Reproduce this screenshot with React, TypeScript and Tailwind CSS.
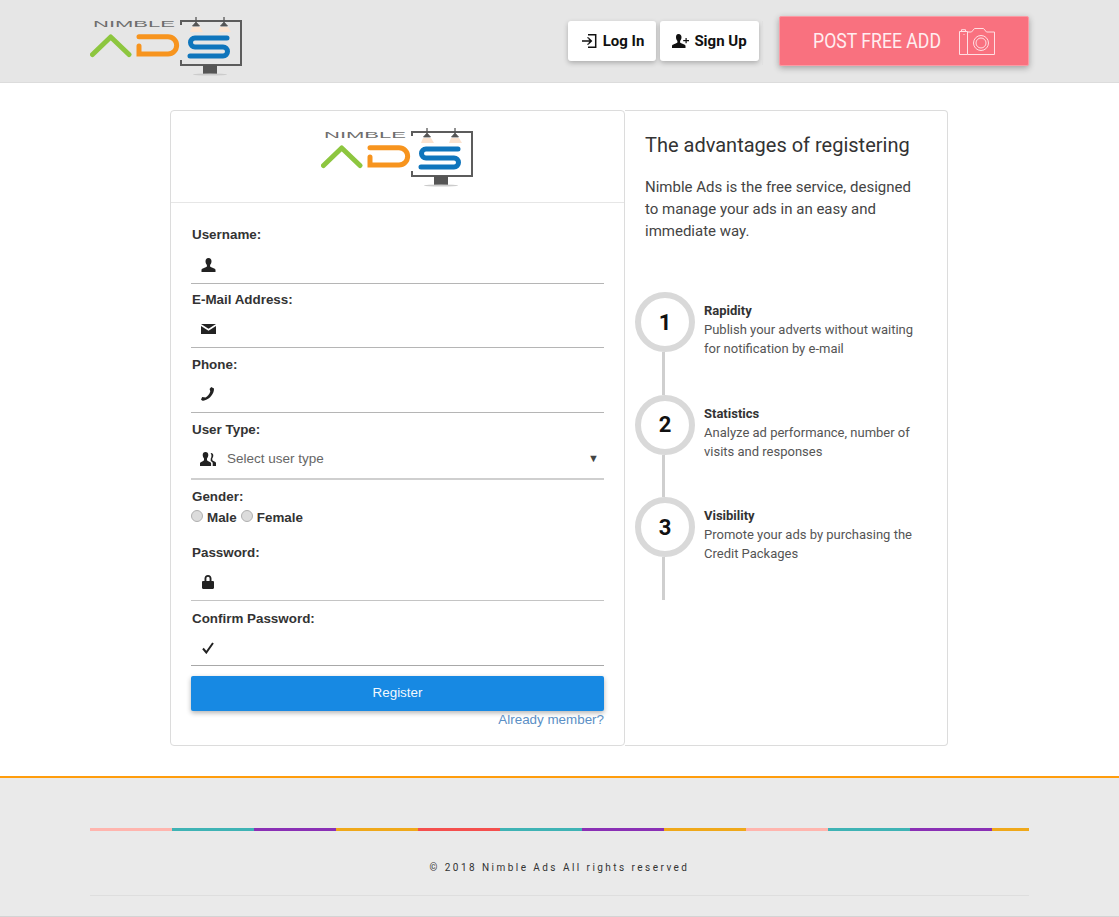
import type { ReactNode } from 'react';

const Logo = () => (
  <svg width="153" height="60" viewBox="0 0 153 60" fill="none">
    <text x="3" y="11" fontFamily="Liberation Sans, sans-serif" fontSize="9" fill="#6e6e6e" textLength="82" lengthAdjust="spacingAndGlyphs">NIMBLE</text>
    <path d="M2.500 38.500 20.700 21 39 38.500" stroke="#8dc63f" strokeWidth="5" strokeLinecap="round" strokeLinejoin="round" />
    <path d="M49 30v8h29a8.600 8.600 0 0 0 0-17.300H49" stroke="#f7941e" strokeWidth="5" strokeLinecap="round" />
    <path d="M137 22H105a4.500 4.500 0 0 0 0 9h28a4.500 4.500 0 0 1 0 9H100" stroke="#0f75bc" strokeWidth="5" strokeLinecap="round" />
    <path d="M91 9V5h60v44H91v-5" stroke="#5c5c5c" strokeWidth="2" />
    <path d="M113 49h14v9h-14z" fill="#555" />
    <ellipse cx="120" cy="58.500" rx="17" ry="1" fill="#ccc" />
    <path d="M106 1v5l-3.500 4h7l-3.500-4zM134 1v5l-3.500 4h7l-3.500-4z" fill="#555" stroke="#555" strokeWidth="0.800" />
    <path d="M102 11h8l3 5h-13zM130 11h8l3 5h-13z" fill="#fbe3d0" />
  </svg>
);

const UserIcon = () => (
  <svg width="15" height="14" viewBox="0 0 15 14" fill="currentColor">
    <path d="M7.500 0c2 0 3 1.400 3 3.200 0 1.600-.8 3-1.400 3.700v1.400c0 .5 1 1 3 1.800 1.300.5 2.400 1 2.400 1.900V14H.5v-2c0-.9 1.100-1.400 2.400-1.900 2-.8 3-1.300 3-1.800V6.900C5.300 6.200 4.500 4.800 4.500 3.200 4.500 1.400 5.500 0 7.500 0z" />
  </svg>
);

const MailIcon = () => (
  <svg width="15" height="10" viewBox="0 0 15 10" fill="currentColor">
    <path d="M0 0h15L7.500 4.800z" />
    <path d="M0 2 4.700 5 7.500 6.800l2.800-1.800L15 2v8H0z" />
  </svg>
);

const PhoneIcon = () => (
  <svg width="14" height="14" viewBox="0 0 14 14" fill="currentColor">
    <path d="M10.200 0 13 1.600c.3 4.800-4 10.800-9.800 12-1.200.3-2.500-.2-3.200-1.200l1.200-2.400 3.300.6c2-.9 4.300-3.600 4.800-6.300L8.600 1.900z" />
  </svg>
);

const UsersIcon = () => (
  <svg width="17" height="14" viewBox="0 0 17 14" fill="currentColor">
    <path d="M5.500 0c1.800 0 2.800 1.300 2.800 3 0 1.400-.7 2.800-1.300 3.400v1.700c0 .5 1 1 2.300 1.600 1 .4 1.800.9 1.800 1.600V14H0v-2.700c0-.7.800-1.200 1.800-1.600C3.100 9.100 4 8.600 4 8.100V6.400C3.400 5.800 2.700 4.400 2.700 3 2.700 1.300 3.700 0 5.500 0z" />
    <path d="M11 1c1.500 0 2.300 1.100 2.300 2.500 0 1.200-.5 2.300-1 2.800v1.700c0 .5.900.9 2.100 1.400.9.400 1.600.9 1.600 1.500V14h-3.300v-2.700c0-1-1-1.700-2-2.200V6.800c.5-.8.800-1.900.8-3 0-1-.3-1.900-.8-2.600.1 0 .2-.2.300-.2z" />
  </svg>
);

const LockIcon = () => (
  <svg width="12" height="14" viewBox="0 0 12 14" fill="currentColor">
    <path d="M6 0c2.200 0 3.500 1.500 3.500 3.600V6h1.300c.7 0 1.200.5 1.200 1.200v5.600c0 .7-.5 1.200-1.200 1.200H1.200C.5 14 0 13.500 0 12.800V7.200C0 6.500.5 6 1.200 6h1.300V3.600C2.500 1.500 3.800 0 6 0zm0 1.800c-1 0-1.600.7-1.600 1.800V6h3.200V3.600c0-1.100-.6-1.800-1.600-1.800z" />
  </svg>
);

const CheckIcon = () => (
  <svg width="12" height="12" viewBox="0 0 12 12" fill="none" stroke="currentColor" strokeWidth="2">
    <path d="M1 6.500 4.300 10.500 11 1" />
  </svg>
);

const LoginIcon = () => (
  <svg width="15" height="14" viewBox="0 0 15 14" fill="none" stroke="#111" strokeWidth="1.500">
    <path d="M6 .8h7.700v12.400H6M6 4.200v-1M6 10.800v-1" />
    <path d="M0 7h9M6.500 4.300 9.300 7l-2.800 2.700" />
  </svg>
);

const UserAddIcon = () => (
  <svg width="17" height="14" viewBox="0 0 17 14" fill="#111">
    <path d="M6.500 0c2 0 3 1.400 3 3.200 0 1.600-.8 3-1.400 3.700v1.400c0 .5 1 1 3 1.800 1.300.5 2.400 1 2.400 1.900v2H0v-2c0-.9 1.100-1.400 2.400-1.900 2-.8 3-1.300 3-1.800V6.900C4.800 6.200 4 4.800 4 3.200 4 1.400 4.500 0 6.500 0z" />
    <path d="M13.500 4h1.200v2H17v1.200h-2.300v2h-1.200v-2h-2.300V6h2.300z" />
  </svg>
);

const CameraIcon = () => (
  <svg width="36" height="27" viewBox="0 0 36 27" fill="none" stroke="#ffdfe3" strokeWidth="1">
    <path d="M.5 26.500V3.500h8v23zM2.500 3.500v-1.800h4v1.800M4.500 6.500h1" />
    <path d="M8.500 4h4l3-3.500h9l3 3.500h8v22.500h-27" />
    <circle cx="22" cy="15" r="7.500" />
    <circle cx="22" cy="15" r="5" />
  </svg>
);

const FIELDS: { label: string; icon: ReactNode; box: string; gap: string }[] = [
  { label: 'Username:', icon: <UserIcon />, box: 'h-[40px] border-[#b5b5b5]', gap: 'mb-[5px]' },
  { label: 'E-Mail Address:', icon: <MailIcon />, box: 'h-[39px] border-[#b5b5b5]', gap: 'mb-[6px]' },
  { label: 'Phone:', icon: <PhoneIcon />, box: 'h-[39px] border-[#b5b5b5]', gap: 'mb-[6px]' },
];

const FIELDS_2: { label: string; icon: ReactNode; box: string; gap: string }[] = [
  { label: 'Password:', icon: <LockIcon />, box: 'h-[39px] border-[#c4c4c4]', gap: 'mb-[7px]' },
  { label: 'Confirm Password:', icon: <CheckIcon />, box: 'h-[38px] border-[#a8a8a8]', gap: 'mb-[10px]' },
];

const STEPS = [
  { n: '1', title: 'Rapidity', text: ['Publish your adverts without waiting', 'for notification by e-mail'] },
  { n: '2', title: 'Statistics', text: ['Analyze ad performance, number of', 'visits and responses'] },
  { n: '3', title: 'Visibility', text: ['Promote your ads by purchasing the', 'Credit Packages'] },
];

const BAR_COLORS = [
  'bg-[#ffb5ae]', 'bg-[#3fb3b5]', 'bg-[#8a30b5]', 'bg-[#efa81a]',
  'bg-[#f44f4d]', 'bg-[#3fb3b5]', 'bg-[#8a30b5]', 'bg-[#efa81a]',
  'bg-[#ffb5ae]', 'bg-[#3fb3b5]', 'bg-[#8a30b5]',
];

function Field({ label, icon, box, gap }: { label: string; icon: ReactNode; box: string; gap: string }) {
  return (
    <div className={gap}>
      <label className="block h-[20px] pt-px pl-px text-[13.4px] leading-[20px] font-bold text-[#333]">{label}</label>
      <div className={`flex items-center border-b ${box}`}>
        <span className="flex w-[34px] justify-center pt-[2px] text-[#222]">{icon}</span>
        <input type="text" className="flex-1 bg-transparent outline-none" />
      </div>
    </div>
  );
}

export default function App() {
  return (
    <div className="min-h-[917px] bg-white font-['Liberation_Sans',Arial,sans-serif]">
      {/* Header */}
      <header className="flex h-[83px] items-start justify-between border-b border-[#dcdcdc] bg-[#e6e6e6] px-[90px]">
        <div className="pt-[16px]"><Logo /></div>
        <div className="flex items-start font-['Roboto',sans-serif]">
          <button className="mt-[21px] flex h-[40px] w-[88px] items-center justify-center gap-[6px] rounded-[3px] bg-white pl-[2px] text-[15px] font-bold text-[#111] shadow-[0_2px_5px_rgba(0,0,0,0.25)]">
            <LoginIcon /> Log In
          </button>
          <button className="mt-[21px] ml-[4px] flex h-[40px] w-[99px] items-center justify-center gap-[5px] rounded-[3px] bg-white text-[15px] font-bold text-[#111] shadow-[0_2px_5px_rgba(0,0,0,0.25)]">
            <UserAddIcon /> Sign Up
          </button>
          <div className="mt-[21px] ml-[3px] h-[44px] w-px bg-[#e0e0e0]" />
          <button className="mt-[16px] ml-[16px] flex h-[50px] w-[250px] items-center rounded-[2px] border border-[#fb9aa4] bg-[#f9717f] pl-[33px] text-[21px] text-[#ffeef0] shadow-[0_2px_6px_rgba(0,0,0,0.3)]">
            <span className="w-[128px] pt-px"><span className="inline-block origin-left scale-x-[0.84] whitespace-nowrap">POST FREE ADD</span></span>
            <span className="ml-[18px]"><CameraIcon /></span>
          </button>
        </div>
      </header>

      {/* Main */}
      <main className="flex h-[693px] items-start pt-[27px] pl-[170px]">
        <section className="h-[636px] w-[455px] rounded-[4px] border border-[#dcdcdc] bg-white">
          <div className="h-[92px] border-b border-[#e6e6e6] pt-[16px] pl-[150px]">
            <Logo />
          </div>
          <form className="px-[20px] pt-[21px]">
            {FIELDS.map(f => <Field key={f.label} {...f} />)}
            <div className="mb-[6px]">
              <label className="block h-[20px] pt-px pl-px text-[13.4px] leading-[20px] font-bold text-[#333]">User Type:</label>
              <div className="flex h-[41px] items-center border-b-2 border-[#cfcfcf] text-[13.5px] text-[#666]">
                <span className="flex w-[34px] justify-center text-[#222]"><UsersIcon /></span>
                <span className="ml-[1px] flex-1 pt-px pl-px">Select user type</span>
                <span className="pr-[5px] text-[11px] text-[#444]">▼</span>
              </div>
            </div>
            <div className="h-[56px]">
              <label className="block h-[20px] pt-px pl-px text-[13.4px] leading-[20px] font-bold text-[#333]">Gender:</label>
              <div className="flex h-[22px] items-center pt-[1px] text-[13.4px] leading-[22px] font-bold text-[#333]">
                <input type="radio" name="gender" className="-mt-[4px] h-[12px] w-[12px] appearance-none rounded-full border border-[#b0b0b0] bg-[#dcdcdc]" />
                <span className="ml-[4px]">Male</span>
                <input type="radio" name="gender" className="-mt-[4px] ml-[4px] h-[12px] w-[12px] appearance-none rounded-full border border-[#b0b0b0] bg-[#dcdcdc]" />
                <span className="ml-[4px]">Female</span>
              </div>
            </div>
            {FIELDS_2.map(f => <Field key={f.label} {...f} />)}
            <button type="button" className="flex h-[35px] w-full items-center justify-center rounded-[2px] bg-[#1789e3] pb-[1px] text-[13.4px] text-[#f2f8fd] shadow-[0_2px_5px_rgba(0,0,0,0.3)]">
              Register
            </button>
            <div className="text-right text-[13.4px] leading-[18px] text-[#5b8fc5]">Already member?</div>
          </form>
        </section>

        <aside className="h-[636px] w-[323px] rounded-r-[4px] border border-l-0 border-[#dcdcdc] bg-white pl-[10px] font-['Roboto',sans-serif] text-[#333]">
          <div className="pl-[10px]">
            <h2 className="mt-[20px] text-[20px] leading-[28px] text-[#333]">The advantages of registering</h2>
            <p className="mt-[17px] text-[15px] leading-[22px] text-[#444]">
              Nimble Ads is the free service, designed<br />to manage your ads in an easy and<br />immediate way.
            </p>
          </div>
          <div className="mt-[50px]">
            {STEPS.map(s => (
              <div key={s.n} className="flex h-[102.6px]">
                <div className="flex w-[60px] flex-col items-center">
                  <div className="flex h-[60px] w-[60px] items-center justify-center rounded-full border-[6px] border-[#d9d9d9] text-[22px] font-bold text-[#111]">{s.n}</div>
                  <div className="-ml-[3px] w-[3px] flex-1 bg-[#cfcfcf]" />
                </div>
                <div className="ml-[9px] pt-[9px] text-[13px] leading-[19px] text-[#555]">
                  <div className="font-bold text-[#333]">{s.title}</div>
                  {s.text.map(t => <div key={t}>{t}</div>)}
                </div>
              </div>
            ))}
          </div>
        </aside>
      </main>

      {/* Footer */}
      <footer className="h-[141px] border-t-2 border-b border-t-[#ff9d0d] border-b-[#d4d4d4] bg-[#eaeaea] px-[90px] pt-[50px]">
        <div className="flex h-[3px] w-[939px]">
          {BAR_COLORS.map((c, i) => <div key={i} className={`h-full w-[82px] ${c}`} />)}
          <div className="h-full flex-1 bg-[#efa81a]" />
        </div>
        <p className="mt-[31px] text-center font-['Roboto',sans-serif] text-[10px] leading-[12px] tracking-[2.45px] text-[#333]">© 2018 Nimble Ads All rights reserved</p>
        <div className="mt-[21px] h-px w-[939px] bg-[#dedede]" />
      </footer>
    </div>
  );
}
